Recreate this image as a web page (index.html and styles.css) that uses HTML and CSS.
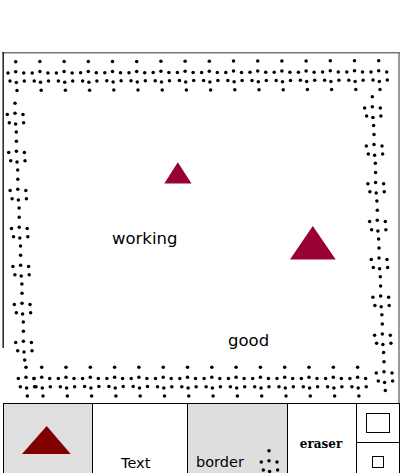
FILE: index.html
```html
<!DOCTYPE html>
<html>
<head>
<meta charset="utf-8">
<link rel="stylesheet" href="styles.css">
</head>
<body>
<div class="page">
  <div class="stage">
    <svg class="art" width="402" height="351" viewBox="0 52 402 351">
      <defs>
        <g id="m">
          <circle cx="0" cy="-10" r="1.75"/>
          <circle cx="-7.7" cy="1.3" r="1.75"/>
          <circle cx="0" cy="0" r="1.75"/>
          <circle cx="8" cy="1.3" r="1.75"/>
          <circle cx="-5.7" cy="9.4" r="1.75"/>
          <circle cx="0.6" cy="10.7" r="1.75"/>
          <circle cx="8.6" cy="9.4" r="1.75"/>
          <circle cx="1.3" cy="18.7" r="1.75"/>
        </g>
      </defs>
      <line x1="2" y1="52.8" x2="400" y2="52.8" stroke="#777" stroke-width="1.6"/>
      <line x1="3.2" y1="52" x2="3.2" y2="348" stroke="#222" stroke-width="1.5"/>
      <line x1="399" y1="52" x2="399" y2="403" stroke="#777" stroke-width="1.5"/>
      <g fill="#000">
        <use href="#m" x="15.7" y="71.7"/>
        <use href="#m" x="39.9" y="71.6"/>
        <use href="#m" x="64.1" y="71.6"/>
        <use href="#m" x="88.3" y="71.5"/>
        <use href="#m" x="112.5" y="71.4"/>
        <use href="#m" x="136.7" y="71.4"/>
        <use href="#m" x="160.9" y="71.3"/>
        <use href="#m" x="185.1" y="71.2"/>
        <use href="#m" x="209.3" y="71.2"/>
        <use href="#m" x="233.5" y="71.1"/>
        <use href="#m" x="257.7" y="71.0"/>
        <use href="#m" x="281.9" y="71.0"/>
        <use href="#m" x="306.1" y="70.9"/>
        <use href="#m" x="330.3" y="70.8"/>
        <use href="#m" x="354.5" y="70.8"/>
        <use href="#m" x="378.7" y="70.7"/>

        <use href="#m" x="15" y="113.3"/>
        <use href="#m" x="16.4" y="151.3"/>
        <use href="#m" x="17.8" y="189.3"/>
        <use href="#m" x="19.2" y="227.3"/>
        <use href="#m" x="20.6" y="265.3"/>
        <use href="#m" x="22" y="303.3"/>
        <use href="#m" x="23.4" y="341.3"/>

        <use href="#m" x="26" y="377.3"/>
        <use href="#m" x="41.7" y="377.3"/>
        <use href="#m" x="66" y="377.3"/>
        <use href="#m" x="90.3" y="377.2"/>
        <use href="#m" x="114.6" y="377.2"/>
        <use href="#m" x="138.9" y="377.2"/>
        <use href="#m" x="163.2" y="377.3"/>
        <use href="#m" x="187.5" y="377.3"/>
        <use href="#m" x="211.8" y="377.3"/>
        <use href="#m" x="236.1" y="377.3"/>
        <use href="#m" x="260.4" y="377.3"/>
        <use href="#m" x="284.7" y="377.3"/>
        <use href="#m" x="309" y="377.3"/>
        <use href="#m" x="333.3" y="377.3"/>
        <use href="#m" x="357.6" y="377.3"/>

        <use href="#m" x="372.3" y="106.7"/>
        <use href="#m" x="374" y="144.6"/>
        <use href="#m" x="375.6" y="182.4"/>
        <use href="#m" x="377.3" y="220.3"/>
        <use href="#m" x="379" y="258.1"/>
        <use href="#m" x="380.6" y="296"/>
        <use href="#m" x="382.3" y="333.9"/>
        <use href="#m" x="384" y="371.7"/>
      </g>
      <polygon points="177.8,162.3 164.3,183.5 191.5,183.5" fill="#990033"/>
      <polygon points="312.8,226 290,259.5 335.7,259.5" fill="#990033"/>
    </svg>
    <span class="label label-working">working</span>
    <span class="label label-good">good</span>
  </div>
  <div class="toolbar">
    <div class="cell cell-shape">
      <svg width="49" height="28" viewBox="0 0 49 28"><polygon points="24.7,0 0,28 48.7,28" fill="#800000"/></svg>
    </div>
    <div class="cell cell-text"><span class="tool-label">Text</span></div>
    <div class="cell cell-border">
      <span class="tool-label">border</span>
      <svg class="border-icon" width="22" height="34" viewBox="0 0 22 34">
        <use href="#m" x="11" y="13.7" fill="#000"/>
      </svg>
    </div>
    <div class="cell cell-eraser"><span class="eraser-label">eraser</span></div>
    <div class="cell cell-sizes">
      <div class="size size-top"><div class="box-lg"></div></div>
      <div class="size size-bottom"><div class="box-sm"></div></div>
    </div>
  </div>
</div>
</body>
</html>
```
FILE: styles.css
```css
html, body {
  margin: 0;
  padding: 0;
  background: #fff;
  overflow: hidden;
}

.page {
  padding-top: 52px;
}

.stage {
  position: relative;
  width: 402px;
  height: 351px;
}

.art {
  position: absolute;
  left: 0;
  top: 0;
  display: block;
}

.label {
  position: absolute;
  font-family: "DejaVu Sans", sans-serif;
  font-size: 16.5px;
  line-height: 19px;
  color: #000;
  white-space: nowrap;
}

.label-working {
  left: 112px;
  top: 177px;
}

.label-good {
  left: 228px;
  top: 279px;
}

.toolbar {
  margin-left: 3px;
  width: 397px;
  height: 78px;
  box-sizing: border-box;
  border: 1px solid #000;
  border-bottom: none;
  display: flex;
}

.cell {
  box-sizing: border-box;
  height: 77px;
  border-right: 1px solid #000;
  flex: none;
}

.cell-shape {
  width: 89px;
  background: #e0e0e0;
  padding: 22px 0 0 18px;
}

.cell-shape svg {
  display: block;
}

.tool-label {
  font-family: "DejaVu Sans", sans-serif;
  font-size: 14.5px;
  line-height: 17px;
  color: #000;
}

.cell-text {
  width: 95px;
  padding: 50px 0 0 28px;
}

.cell-border {
  width: 100px;
  background: #dedede;
  padding: 50px 7px 0 8px;
  display: flex;
  align-items: flex-start;
}

.border-icon {
  display: block;
  margin-left: auto;
  margin-top: -7px;
}

.cell-eraser {
  width: 69px;
  padding: 30px 2px 0 0;
  text-align: center;
}

.eraser-label {
  font-family: "DejaVu Serif", serif;
  font-weight: bold;
  font-size: 12px;
  line-height: 14px;
  color: #000;
}

.cell-sizes {
  width: 42px;
  border-right: none;
  display: flex;
  flex-direction: column;
}

.size {
  height: 38px;
  display: flex;
  align-items: center;
  justify-content: center;
  flex: none;
}

.size-top {
  border-bottom: 1px solid #000;
}

.box-lg {
  width: 24px;
  height: 20px;
  box-sizing: border-box;
  border: 1px solid #000;
}

.box-sm {
  width: 12px;
  height: 12px;
  box-sizing: border-box;
  border: 1px solid #000;
}
```
